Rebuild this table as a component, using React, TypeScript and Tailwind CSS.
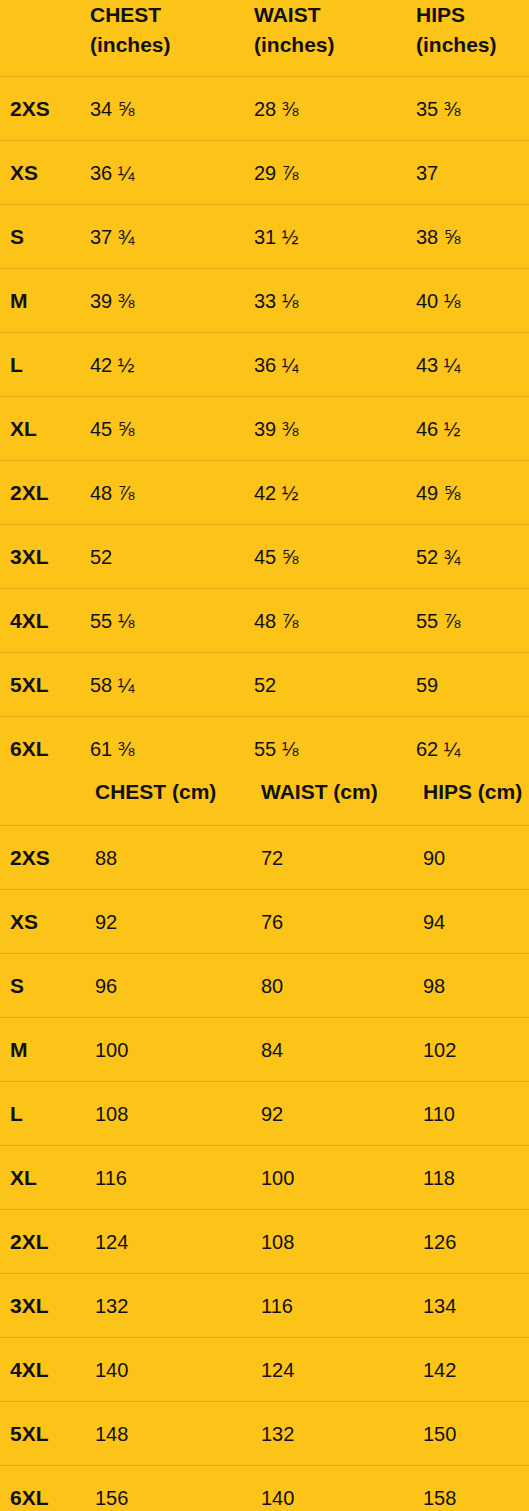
import React from "react";

const inches: [string, string, string, string][] = [
  ["2XS", "34 ⅝", "28 ⅜", "35 ⅜"],
  ["XS", "36 ¼", "29 ⅞", "37"],
  ["S", "37 ¾", "31 ½", "38 ⅝"],
  ["M", "39 ⅜", "33 ⅛", "40 ⅛"],
  ["L", "42 ½", "36 ¼", "43 ¼"],
  ["XL", "45 ⅝", "39 ⅜", "46 ½"],
  ["2XL", "48 ⅞", "42 ½", "49 ⅝"],
  ["3XL", "52", "45 ⅝", "52 ¾"],
  ["4XL", "55 ⅛", "48 ⅞", "55 ⅞"],
  ["5XL", "58 ¼", "52", "59"],
  ["6XL", "61 ⅜", "55 ⅛", "62 ¼"],
];

const cm: [string, string, string, string][] = [
  ["2XS", "88", "72", "90"],
  ["XS", "92", "76", "94"],
  ["S", "96", "80", "98"],
  ["M", "100", "84", "102"],
  ["L", "108", "92", "110"],
  ["XL", "116", "100", "118"],
  ["2XL", "124", "108", "126"],
  ["3XL", "132", "116", "134"],
  ["4XL", "140", "124", "142"],
  ["5XL", "148", "132", "150"],
  ["6XL", "156", "140", "158"],
];

const font = { fontFamily: '"Liberation Sans", Arial, sans-serif' };

export default function App() {
  return (
    <div
      className="w-[529px] bg-[#fcc419] text-[#111111] text-[20px] leading-[30px] overflow-hidden"
      style={font}
    >
      {/* Inches table */}
      <div className="grid grid-cols-[80px_164px_162px_1fr] pl-[10px] h-[77px] border-b border-[#e4ae18] font-bold text-[21px]">
        <div />
        <div>CHEST<br />(inches)</div>
        <div>WAIST<br />(inches)</div>
        <div className="whitespace-nowrap">HIPS<br />(inches)</div>
      </div>
      {inches.map((r, i) => (
        <div
          key={r[0]}
          className={`grid grid-cols-[80px_164px_162px_1fr] pl-[10px] items-center ${
            i === inches.length - 1 ? "h-[63px]" : "h-16 border-b border-[#e4ae18]"
          }`}
        >
          <div className="font-bold text-[21px]">{r[0]}</div>
          <div>{r[1]}</div>
          <div>{r[2]}</div>
          <div>{r[3]}</div>
        </div>
      ))}

      {/* CM table */}
      <div className="grid grid-cols-[85px_166px_162px_1fr] pl-[10px] h-[46px] border-b border-[#e4ae18] font-bold text-[21px] leading-[24px]">
        <div />
        <div className="whitespace-nowrap">CHEST (cm)</div>
        <div className="whitespace-nowrap">WAIST (cm)</div>
        <div className="whitespace-nowrap">HIPS (cm)</div>
      </div>
      {cm.map((r, i) => (
        <div
          key={r[0] + "cm"}
          className={`grid grid-cols-[85px_166px_162px_1fr] pl-[10px] items-center h-16 ${
            i === cm.length - 1 ? "" : "border-b border-[#e4ae18]"
          }`}
        >
          <div className="font-bold text-[21px]">{r[0]}</div>
          <div>{r[1]}</div>
          <div>{r[2]}</div>
          <div>{r[3]}</div>
        </div>
      ))}
    </div>
  );
}
